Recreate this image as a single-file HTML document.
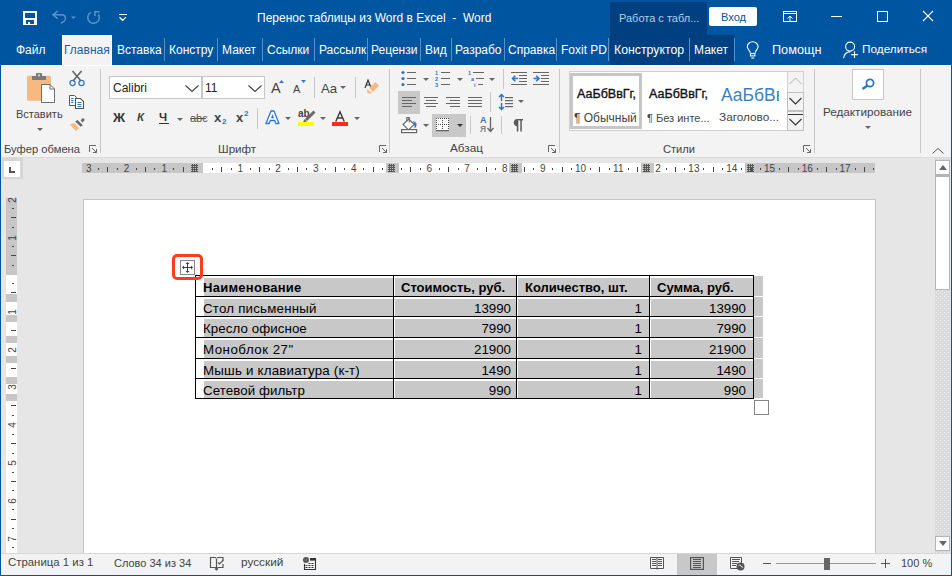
<!DOCTYPE html>
<html><head><meta charset="utf-8"><style>*{box-sizing:border-box}
html,body{margin:0;padding:0;width:952px;height:576px;overflow:hidden;background:#e6e6e6;font-family:"Liberation Sans",sans-serif;position:relative}
.a{position:absolute}
svg.a{overflow:visible}
.t{position:absolute;white-space:nowrap;line-height:1}
.rn{font-size:10px;color:#444;line-height:10px}
</style></head><body>
<div class="a" style="left:0px;top:0px;width:952px;height:65px;background:#0055a0;"></div>
<div class="a" style="left:610px;top:2px;width:97px;height:33px;background:#003f80;"></div>
<div class="a" style="left:610px;top:35px;width:124px;height:30px;background:#003f80;"></div>
<div class="t" style="left:257px;top:11.84px;font-size:12px;color:#fff;font-weight:400;white-space:pre">Перенос таблицы из Word в Excel  -  Word</div>
<div class="t" style="left:619px;top:12.69px;font-size:11px;color:#b9cde6;font-weight:400;">Работа с табл...</div>
<div class="a" style="left:709px;top:7px;width:48px;height:19px;background:#fff;border-radius:2px"></div>
<div class="t" style="left:721px;top:11.60px;font-size:11.1px;color:#0055a0;font-weight:400;">Вход</div>
<svg class="a" style="left:23px;top:11px" width="14" height="14" viewBox="0 0 14 14"><rect x="0" y="0" width="14" height="14" fill="#fff"/><rect x="2" y="2" width="10" height="5" fill="#0055a0"/><rect x="3" y="9" width="8" height="4" fill="#0055a0"/><rect x="5" y="11" width="2" height="2" fill="#fff"/></svg>
<svg class="a" style="left:46px;top:6px" width="60" height="24" viewBox="46 6 60 24"><g fill="none" stroke="#5e90cc" stroke-width="1.5"><path d="M52.5 14.8 H61 C64 14.8 65.5 16.5 65.5 18.3 C65.5 20.5 63 22.5 60.8 23"/><path d="M57.7 11 L53 14.8 L57.7 18.6"/><path d="M91 12.3 A5.8 5.8 0 1 0 98.3 14.2"/><path d="M95 16 V11.7 H99.6"/></g><path d="M71 16.5H76L73.5 19Z" fill="#5e90cc"/></svg>
<svg class="a" style="left:117px;top:13px" width="12" height="9" viewBox="0 0 12 9"><rect x="2" y="1" width="8" height="1" fill="#fff"/><path d="M2.5 4.2 L5.7 7.3 L8.8 4.2" fill="none" stroke="#fff" stroke-width="1.2"/></svg>
<svg class="a" style="left:783px;top:11px" width="14" height="11" viewBox="0 0 14 11"><g fill="none" stroke="#fff" stroke-width="1"><rect x="0.5" y="0.5" width="13" height="10"/><path d="M0.5 2.5H13.5"/><path d="M7 10.5V5 M4.5 7.5 L7 5 L9.5 7.5"/></g></svg>
<div class="a" style="left:831px;top:16px;width:11px;height:1px;background:#fff;"></div>
<svg class="a" style="left:877px;top:11px" width="11" height="11" viewBox="0 0 11 11"><rect x="0.5" y="0.5" width="10" height="10" fill="none" stroke="#fff" stroke-width="1"/></svg>
<svg class="a" style="left:922px;top:10px" width="12" height="12" viewBox="0 0 12 12"><path d="M1 1L11 11M11 1L1 11" stroke="#fff" stroke-width="1.1"/></svg>
<div class="a" style="left:62px;top:35px;width:50px;height:31px;background:#f3f3f3;border-left:1px solid #fff;border-right:1px solid #fff"></div>
<div class="t" style="left:16px;top:43.84px;font-size:12px;color:#fff;font-weight:400;">Файл</div>
<div class="t" style="left:64px;top:43.84px;font-size:12px;color:#1e5aa8;font-weight:400;">Главная</div>
<div class="t" style="left:117px;top:43.84px;font-size:12px;color:#fff;font-weight:400;">Вставка</div>
<div class="t" style="left:169px;top:43.84px;font-size:12px;color:#fff;font-weight:400;">Констру</div>
<div class="t" style="left:222px;top:43.84px;font-size:12px;color:#fff;font-weight:400;">Макет</div>
<div class="t" style="left:267px;top:43.84px;font-size:12px;color:#fff;font-weight:400;">Ссылки</div>
<div class="t" style="left:319px;top:43.84px;font-size:12px;color:#fff;font-weight:400;">Рассылк</div>
<div class="t" style="left:371px;top:43.84px;font-size:12px;color:#fff;font-weight:400;">Рецензи</div>
<div class="t" style="left:425px;top:43.84px;font-size:12px;color:#fff;font-weight:400;">Вид</div>
<div class="t" style="left:455px;top:43.84px;font-size:12px;color:#fff;font-weight:400;">Разрабо</div>
<div class="t" style="left:508px;top:43.84px;font-size:12px;color:#fff;font-weight:400;">Справка</div>
<div class="t" style="left:561px;top:43.84px;font-size:12px;color:#fff;font-weight:400;">Foxit PD</div>
<div class="t" style="left:614px;top:43.59px;font-size:12.3px;color:#fff;font-weight:400;">Конструктор</div>
<div class="t" style="left:694px;top:43.84px;font-size:12px;color:#fff;font-weight:400;">Макет</div>
<div class="t" style="left:772px;top:44.25px;font-size:12.7px;color:#fff;font-weight:400;">Помощн</div>
<div class="t" style="left:862px;top:44.01px;font-size:11.8px;color:#fff;font-weight:400;">Поделиться</div>
<div class="a" style="left:164px;top:38px;width:1px;height:23px;background:#5a8fca;"></div>
<div class="a" style="left:217px;top:38px;width:1px;height:23px;background:#5a8fca;"></div>
<div class="a" style="left:262px;top:38px;width:1px;height:23px;background:#5a8fca;"></div>
<div class="a" style="left:314px;top:38px;width:1px;height:23px;background:#5a8fca;"></div>
<div class="a" style="left:367px;top:38px;width:1px;height:23px;background:#5a8fca;"></div>
<div class="a" style="left:420px;top:38px;width:1px;height:23px;background:#5a8fca;"></div>
<div class="a" style="left:451px;top:38px;width:1px;height:23px;background:#5a8fca;"></div>
<div class="a" style="left:504px;top:38px;width:1px;height:23px;background:#5a8fca;"></div>
<div class="a" style="left:556px;top:38px;width:1px;height:23px;background:#5a8fca;"></div>
<div class="a" style="left:608px;top:38px;width:1px;height:23px;background:#5a8fca;"></div>
<div class="a" style="left:689px;top:38px;width:1px;height:23px;background:#5a8fca;"></div>
<div class="a" style="left:734px;top:38px;width:1px;height:23px;background:#5a8fca;"></div>
<svg class="a" style="left:746px;top:40px" width="14" height="19" viewBox="0 0 14 19"><g fill="none" stroke="#fff" stroke-width="1.1"><path d="M4.5 12.8 L3.2 10.6 C2 9 1.3 8 1.3 6.8 A5.4 5 0 0 1 12.1 6.8 C12.1 8 11.4 9 10.2 10.6 L8.9 12.8"/><rect x="4.5" y="13.5" width="4.4" height="2.4"/><path d="M5.3 18 H8.2"/></g></svg>
<svg class="a" style="left:840px;top:40px" width="20" height="20" viewBox="0 0 20 20"><g fill="none" stroke="#fff" stroke-width="1.1"><circle cx="10.1" cy="6.6" r="4.5"/><path d="M3.6 18.2 C4 14.5 6.5 12 10.5 11.6"/><path d="M14.5 11.2 V18 M11.1 14.6 H17.9"/></g></svg>
<div class="a" style="left:0px;top:65px;width:952px;height:93px;background:#f3f3f3;border-top:1px solid #fff;border-left:1px solid #fff"></div>
<div class="a" style="left:0px;top:157px;width:952px;height:1px;background:#dadada;"></div>
<div class="a" style="left:100px;top:69px;width:1px;height:84px;background:#c8c8c8;"></div>
<div class="a" style="left:389px;top:69px;width:1px;height:84px;background:#c8c8c8;"></div>
<div class="a" style="left:559px;top:69px;width:1px;height:84px;background:#c8c8c8;"></div>
<div class="a" style="left:814px;top:69px;width:1px;height:84px;background:#c8c8c8;"></div>
<div class="a" style="left:920px;top:69px;width:1px;height:84px;background:#c8c8c8;"></div>
<div class="t" style="left:4px;top:143.52px;font-size:11.2px;color:#444;font-weight:400;">Буфер обмена</div>
<div class="t" style="left:218px;top:143.18px;font-size:11.6px;color:#444;font-weight:400;">Шрифт</div>
<div class="t" style="left:450px;top:143.01px;font-size:11.8px;color:#444;font-weight:400;">Абзац</div>
<div class="t" style="left:663px;top:143.60px;font-size:11.1px;color:#444;font-weight:400;">Стили</div>
<svg class="a" style="left:89px;top:145px" width="8" height="8" viewBox="0 0 8 8"><g fill="none" stroke="#666" stroke-width="1"><path d="M0.5 7V0.5H7"/><path d="M3 3L7.5 7.5M7.5 4V7.5H4"/></g></svg>
<svg class="a" style="left:379px;top:145px" width="8" height="8" viewBox="0 0 8 8"><g fill="none" stroke="#666" stroke-width="1"><path d="M0.5 7V0.5H7"/><path d="M3 3L7.5 7.5M7.5 4V7.5H4"/></g></svg>
<svg class="a" style="left:548px;top:145px" width="8" height="8" viewBox="0 0 8 8"><g fill="none" stroke="#666" stroke-width="1"><path d="M0.5 7V0.5H7"/><path d="M3 3L7.5 7.5M7.5 4V7.5H4"/></g></svg>
<svg class="a" style="left:803px;top:145px" width="8" height="8" viewBox="0 0 8 8"><g fill="none" stroke="#666" stroke-width="1"><path d="M0.5 7V0.5H7"/><path d="M3 3L7.5 7.5M7.5 4V7.5H4"/></g></svg>
<svg class="a" style="left:26px;top:72px" width="31" height="32" viewBox="0 0 31 32">
<rect x="1" y="3.8" width="24" height="25" rx="1.5" fill="#f7b97e"/>
<rect x="6" y="4" width="14" height="4" fill="#7a7a7a"/>
<rect x="10" y="1" width="6" height="4.5" rx="1" fill="#7a7a7a"/>
<rect x="12" y="2.3" width="2" height="2" fill="#d0d0d0"/>
<path d="M15.5 12.5 H24 L28.5 17 V30.5 H15.5 Z" fill="#fff" stroke="#6d6d6d" stroke-width="1"/>
<path d="M24 12.5 V17 H28.5" fill="none" stroke="#6d6d6d" stroke-width="1"/>
</svg>
<div class="t" style="left:16px;top:108.69px;font-size:11px;color:#444;font-weight:400;">Вставить</div>
<svg class="a" style="left:37px;top:128px" width="6" height="3" viewBox="0 0 6 3"><path d="M0 0H6L3 3Z" fill="#666"/></svg>
<svg class="a" style="left:69px;top:70px" width="16" height="17" viewBox="0 0 16 17">
<path d="M4 11 L12.5 1 M12 11 L3.5 1" stroke="#666" stroke-width="1.7" fill="none"/>
<circle cx="3.5" cy="13" r="2.6" fill="none" stroke="#2f77c2" stroke-width="1.2"/>
<circle cx="12.5" cy="13" r="2.6" fill="none" stroke="#2f77c2" stroke-width="1.2"/>
</svg>
<svg class="a" style="left:68px;top:94px" width="17" height="16" viewBox="0 0 17 16">
<path d="M1.5 1.5H6.5L8.5 3.5V11.5H1.5Z" fill="#fff" stroke="#555" stroke-width="1"/>
<path d="M7.5 4.5H12.5L15.5 7.5V14.5H7.5Z" fill="#fff" stroke="#555" stroke-width="1.1"/>
<path d="M9.5 8.5H13.5M9.5 10.5H13.5M9.5 12.5H13.5" stroke="#2f77c2" stroke-width="1"/>
<path d="M3 4.5H5.5M3 6.5H5.5M3 8.5H5.5" stroke="#2f77c2" stroke-width="1"/>
</svg>
<svg class="a" style="left:69px;top:117px" width="17" height="15" viewBox="0 0 17 15">
<path d="M11.7 3.2 L13.8 1.1 L15.9 2.8 L13.4 5.5Z" fill="#666"/>
<path d="M6.2 4.4 L8.5 3 L13.8 8.2 L11.7 9.7Z" fill="#666"/>
<path d="M0.8 7.6 L5.2 5.9 L10.2 11 L6.9 13.9Z" fill="#f7b97e"/>
</svg>
<div class="a" style="left:109px;top:76px;width:93px;height:23px;background:#fff;border:1px solid #c6c6c6;"></div>
<div class="t" style="left:113px;top:81.84px;font-size:12px;color:#222;font-weight:400;">Calibri</div>
<svg class="a" style="left:185px;top:85px" width="14" height="7" viewBox="0 0 14 7"><path d="M0.5 0.5L7 6.5L13.5 0.5" fill="none" stroke="#444" stroke-width="1.2"/></svg>
<div class="a" style="left:202px;top:76px;width:63px;height:23px;background:#fff;border:1px solid #c6c6c6;"></div>
<div class="t" style="left:205px;top:81.84px;font-size:12px;color:#222;font-weight:400;">11</div>
<svg class="a" style="left:248px;top:85px" width="14" height="7" viewBox="0 0 14 7"><path d="M0.5 0.5L7 6.5L13.5 0.5" fill="none" stroke="#444" stroke-width="1.2"/></svg>
<div class="t" style="left:271px;top:80.73px;font-size:14.5px;color:#444;font-weight:400;">A</div>
<svg class="a" style="left:279px;top:80px" width="5" height="3" viewBox="0 0 5 3"><path d="M0 3H5L2.5 0Z" fill="#2f77c2"/></svg>
<div class="t" style="left:293px;top:83.69px;font-size:11px;color:#444;font-weight:400;">A</div>
<svg class="a" style="left:301px;top:80px" width="5" height="3" viewBox="0 0 5 3"><path d="M0 0H5L2.5 3Z" fill="#2f77c2"/></svg>
<div class="a" style="left:314px;top:77px;width:1px;height:21px;background:#c8c8c8;"></div>
<div class="t" style="left:321px;top:81.83px;font-size:13.2px;color:#444;font-weight:400;">Aa</div>
<svg class="a" style="left:340px;top:86px" width="6" height="3" viewBox="0 0 6 3"><path d="M0 0H6L3 3Z" fill="#666"/></svg>
<div class="a" style="left:355px;top:77px;width:1px;height:21px;background:#c8c8c8;"></div>
<svg class="a" style="left:364px;top:79px" width="16" height="16" viewBox="0 0 16 16"><path d="M1 9 L4 1.2 L6.8 8 M2.2 6 H6" fill="none" stroke="#333" stroke-width="1.2"/><path d="M5 8.75 L11.5 2.9 L15 6.5 L9 12.9Z" fill="#f7b97e"/><path d="M3.3 10.3 L8 14 L7.3 14.8 L4 14.3 L2.8 12Z" fill="#f7b97e"/></svg>
<div class="t" style="left:113px;top:111.24px;font-size:13.3px;color:#333;font-weight:700;">Ж</div>
<div class="t" style="left:137px;top:112.27px;font-size:11.5px;color:#444;font-weight:700;font-style:italic">К</div>
<div class="t" style="left:159px;top:112.27px;font-size:11.5px;color:#333;font-weight:700;">Ч</div>
<div class="a" style="left:159px;top:123px;width:10px;height:1px;background:#333;"></div>
<svg class="a" style="left:177px;top:118px" width="6" height="3" viewBox="0 0 6 3"><path d="M0 0H6L3 3Z" fill="#666"/></svg>
<div class="t" style="left:190px;top:112.69px;font-size:11px;color:#555;font-weight:400;">abc</div>
<div class="a" style="left:190px;top:118px;width:16px;height:1px;background:#555;"></div>
<div class="t" style="left:214px;top:111.00px;font-size:13px;color:#444;font-weight:700;">x</div>
<div class="t" style="left:222px;top:118.23px;font-size:8px;color:#2f77c2;font-weight:700;">2</div>
<div class="t" style="left:236px;top:111.00px;font-size:13px;color:#444;font-weight:700;">x</div>
<div class="t" style="left:244px;top:110.23px;font-size:8px;color:#2f77c2;font-weight:700;">2</div>
<div class="a" style="left:257px;top:108px;width:1px;height:21px;background:#c8c8c8;"></div>
<svg class="a" style="left:265px;top:110px" width="15" height="15" viewBox="0 0 15 15"><path d="M1 13.5 L6 1 H9 L14 13.5 H10.8 L9.8 10.5 H5.2 L4.2 13.5Z" fill="#fff" stroke="#2f77c2" stroke-width="1.3" stroke-linejoin="round"/><path d="M6 8.2 L7.5 4 L9 8.2Z" fill="#2f77c2"/></svg>
<svg class="a" style="left:285px;top:117px" width="6" height="3" viewBox="0 0 6 3"><path d="M0 0H6L3 3Z" fill="#666"/></svg>
<div class="t" style="left:298px;top:108.53px;font-size:10px;color:#444;font-weight:700;">ab</div>
<svg class="a" style="left:300px;top:110px" width="16" height="13" viewBox="0 0 16 13"><path d="M14.5 1.5 L6 10" stroke="#6a6a6a" stroke-width="3" stroke-linecap="butt"/><path d="M4.5 9 L7 11.5 L3 12.5Z" fill="#6a6a6a"/></svg>
<div class="a" style="left:298px;top:122px;width:16px;height:4px;background:#ffff00;"></div>
<svg class="a" style="left:320px;top:117px" width="6" height="3" viewBox="0 0 6 3"><path d="M0 0H6L3 3Z" fill="#666"/></svg>
<svg class="a" style="left:335px;top:111px" width="10" height="11" viewBox="0 0 10 11"><path d="M0.8 10.5 L5 0.8 L9.2 10.5 M2.4 7 H7.6" fill="none" stroke="#3a3a3a" stroke-width="1.4"/></svg>
<div class="a" style="left:332px;top:122px;width:16px;height:4px;background:#ff2a1a;"></div>
<svg class="a" style="left:354px;top:117px" width="6" height="3" viewBox="0 0 6 3"><path d="M0 0H6L3 3Z" fill="#666"/></svg>
<svg class="a" style="left:401px;top:70px" width="15" height="16" viewBox="0 0 15 16"><g fill="#2f77c2"><circle cx="2" cy="2.5" r="1.6"/><circle cx="2" cy="8.5" r="1.6"/><circle cx="2" cy="14.5" r="1.6"/></g><g fill="#666"><rect x="6" y="2" width="9" height="1"/><rect x="6" y="8" width="9" height="1"/><rect x="6" y="14" width="9" height="1"/></g></svg>
<svg class="a" style="left:423px;top:78px" width="6" height="3" viewBox="0 0 6 3"><path d="M0 0H6L3 3Z" fill="#666"/></svg>
<svg class="a" style="left:435px;top:70px" width="16" height="16" viewBox="0 0 16 16"><g fill="#2f77c2" font-size="5.5" font-family="Liberation Sans" font-weight="700"><text x="0" y="5">1</text><text x="0" y="11">2</text><text x="0" y="17">3</text></g><g fill="#666"><rect x="6" y="2" width="9" height="1"/><rect x="6" y="8" width="9" height="1"/><rect x="6" y="14" width="9" height="1"/></g></svg>
<svg class="a" style="left:457px;top:78px" width="6" height="3" viewBox="0 0 6 3"><path d="M0 0H6L3 3Z" fill="#666"/></svg>
<svg class="a" style="left:468px;top:70px" width="17" height="16" viewBox="0 0 17 16"><g fill="#2f77c2" font-size="5.5" font-family="Liberation Sans" font-weight="700"><text x="0" y="5">1</text><text x="3" y="11">a</text><text x="6" y="17">i</text></g><g fill="#666"><rect x="5" y="2" width="11" height="1"/><rect x="8" y="8" width="8" height="1"/><rect x="10" y="14" width="5" height="1"/></g></svg>
<svg class="a" style="left:489px;top:78px" width="6" height="3" viewBox="0 0 6 3"><path d="M0 0H6L3 3Z" fill="#666"/></svg>
<div class="a" style="left:503px;top:69px;width:1px;height:20px;background:#c8c8c8;"></div>
<svg class="a" style="left:511px;top:72px" width="16" height="13" viewBox="0 0 16 13"><g fill="#666"><rect x="0" y="0" width="16" height="1"/><rect x="8" y="3" width="8" height="1"/><rect x="8" y="6" width="8" height="1"/><rect x="8" y="9" width="8" height="1"/><rect x="0" y="12" width="16" height="1"/></g><path d="M7 6.5H1.5 M4.3 3.7L1.5 6.5L4.3 9.3" fill="none" stroke="#2f77c2" stroke-width="1.6"/></svg>
<svg class="a" style="left:533px;top:72px" width="16" height="13" viewBox="0 0 16 13"><g fill="#666"><rect x="0" y="0" width="16" height="1"/><rect x="8" y="3" width="8" height="1"/><rect x="8" y="6" width="8" height="1"/><rect x="8" y="9" width="8" height="1"/><rect x="0" y="12" width="16" height="1"/></g><path d="M0.5 6.5H6 M3.2 3.7L6 6.5L3.2 9.3" fill="none" stroke="#2f77c2" stroke-width="1.6"/></svg>
<div class="a" style="left:398px;top:91px;width:22px;height:23px;background:#c8c8c8;"></div>
<svg class="a" style="left:402px;top:97px" width="14" height="10" viewBox="0 0 14 10"><g fill="#666"><rect x="0" y="0" width="14" height="1"/><rect x="0" y="3" width="10" height="1"/><rect x="0" y="6" width="14" height="1"/><rect x="0" y="9" width="10" height="1"/></g></svg>
<svg class="a" style="left:424px;top:97px" width="14" height="10" viewBox="0 0 14 10"><g fill="#666"><rect x="0" y="0" width="14" height="1"/><rect x="2" y="3" width="10" height="1"/><rect x="0" y="6" width="14" height="1"/><rect x="2" y="9" width="10" height="1"/></g></svg>
<svg class="a" style="left:446px;top:97px" width="14" height="10" viewBox="0 0 14 10"><g fill="#666"><rect x="0" y="0" width="14" height="1"/><rect x="4" y="3" width="10" height="1"/><rect x="0" y="6" width="14" height="1"/><rect x="4" y="9" width="10" height="1"/></g></svg>
<svg class="a" style="left:468px;top:97px" width="14" height="10" viewBox="0 0 14 10"><g fill="#666"><rect x="0" y="0" width="14" height="1"/><rect x="0" y="3" width="14" height="1"/><rect x="0" y="6" width="14" height="1"/><rect x="0" y="9" width="14" height="1"/></g></svg>
<div class="a" style="left:490px;top:92px;width:1px;height:20px;background:#c8c8c8;"></div>
<svg class="a" style="left:497px;top:93px" width="17" height="18" viewBox="0 0 17 18"><g fill="#666"><rect x="8" y="4" width="8" height="1.2"/><rect x="8" y="7" width="8" height="1.2"/><rect x="8" y="10" width="8" height="1.2"/><rect x="8" y="13" width="8" height="1.2"/></g><path d="M4.5 1.5V8 M2 4 L4.5 1.5 L7 4 M4.5 10V16.5 M2 14 L4.5 16.5 L7 14" fill="none" stroke="#2f77c2" stroke-width="1.5"/></svg>
<svg class="a" style="left:518px;top:100px" width="6" height="3" viewBox="0 0 6 3"><path d="M0 0H6L3 3Z" fill="#666"/></svg>
<svg class="a" style="left:400px;top:116px" width="18" height="18" viewBox="0 0 18 18"><path d="M3 8.5 L8.7 3 L14.3 8.5 L8.5 13.8 Z" fill="#fff" stroke="#666" stroke-width="1.1"/><path d="M6.8 5.5 V1.5 H9.3 V6.5" fill="none" stroke="#666" stroke-width="1.1"/><path d="M13 5 Q17 6.5 16.6 9 Q16.2 11 14.6 12.5 L14.3 8.5Z" fill="#2f77c2"/><rect x="1.6" y="13.6" width="15" height="3" fill="#fff" stroke="#666" stroke-width="1.2"/></svg>
<svg class="a" style="left:423px;top:124px" width="6" height="3" viewBox="0 0 6 3"><path d="M0 0H6L3 3Z" fill="#666"/></svg>
<div class="a" style="left:432px;top:114px;width:34px;height:23px;background:#c8c8c8;"></div>
<svg class="a" style="left:436px;top:118px" width="13" height="14" viewBox="0 0 13 14"><rect x="0" y="0" width="13" height="12" fill="#fff"/><g fill="#444"><rect x="0" y="0" width="1" height="1"/><rect x="2" y="0" width="1" height="1"/><rect x="4" y="0" width="1" height="1"/><rect x="6" y="0" width="1" height="1"/><rect x="8" y="0" width="1" height="1"/><rect x="10" y="0" width="1" height="1"/><rect x="12" y="0" width="1" height="1"/><rect x="0" y="2" width="1" height="1"/><rect x="12" y="2" width="1" height="1"/><rect x="0" y="4" width="1" height="1"/><rect x="12" y="4" width="1" height="1"/><rect x="0" y="6" width="1" height="1"/><rect x="12" y="6" width="1" height="1"/><rect x="0" y="8" width="1" height="1"/><rect x="12" y="8" width="1" height="1"/><rect x="0" y="10" width="1" height="1"/><rect x="12" y="10" width="1" height="1"/><rect x="6" y="2" width="1" height="1"/><rect x="6" y="4" width="1" height="1"/><rect x="6" y="8" width="1" height="1"/><rect x="6" y="10" width="1" height="1"/><rect x="2" y="6" width="1" height="1"/><rect x="4" y="6" width="1" height="1"/><rect x="6" y="6" width="1" height="1"/><rect x="8" y="6" width="1" height="1"/><rect x="10" y="6" width="1" height="1"/><rect x="0" y="12" width="13" height="1.3" fill="#666"/></g></svg>
<svg class="a" style="left:457px;top:124px" width="6" height="3" viewBox="0 0 6 3"><path d="M0 0H6L3 3Z" fill="#333"/></svg>
<div class="a" style="left:470px;top:116px;width:1px;height:18px;background:#c8c8c8;"></div>
<div class="t" style="left:480px;top:116.38px;font-size:9px;color:#2f77c2;font-weight:700;">A</div>
<div class="t" style="left:480px;top:124.80px;font-size:8.5px;color:#888;font-weight:700;">Я</div>
<svg class="a" style="left:487px;top:117px" width="7" height="16" viewBox="0 0 7 16"><path d="M3.5 0V14 M0.5 11L3.5 14.5L6.5 11" fill="none" stroke="#666" stroke-width="1.3"/></svg>
<div class="a" style="left:501px;top:116px;width:1px;height:18px;background:#c8c8c8;"></div>
<svg class="a" style="left:512px;top:119px" width="11" height="13" viewBox="0 0 11 13"><g fill="#5a5a5a"><path d="M6 0 H11 V1.4 H6 Z"/><path d="M5.6 0 A3.8 3.6 0 0 0 5.6 7.2 Z"/><rect x="4.8" y="0" width="1.5" height="12.5"/><rect x="8.3" y="0" width="1.5" height="12.5"/></g></svg>
<div class="a" style="left:569px;top:71px;width:235px;height:60px;background:#fff;border:1px solid #d0d0d0;"></div>
<div class="a" style="left:570px;top:73px;width:72px;height:56px;border:3px solid #c6c6c6;"></div>
<div class="t" style="left:577px;top:88.42px;font-size:12.5px;color:#111;font-weight:400;-webkit-text-stroke:0.35px #111">АаБбВвГг,</div>
<div class="t" style="left:574px;top:111.84px;font-size:12px;color:#444;font-weight:400;">¶ Обычный</div>
<div class="t" style="left:649px;top:88.42px;font-size:12.5px;color:#111;font-weight:400;-webkit-text-stroke:0.35px #111">АаБбВвГг,</div>
<div class="t" style="left:647px;top:112.69px;font-size:11px;color:#444;font-weight:400;">¶ Без инте...</div>
<div class="a" style="left:719px;top:80px;width:60px;height:24px;overflow:hidden"><div class="t" style="left:2px;top:6.5px;font-size:17.5px;color:#3a7fc1">АаБбВв</div></div>
<div class="t" style="left:719px;top:112.01px;font-size:11.8px;color:#444;font-weight:400;">Заголово...</div>
<div class="a" style="left:787px;top:71px;width:17px;height:60px;background:#f3f3f3;border:1px solid #d0d0d0;"></div>
<div class="a" style="left:787px;top:92px;width:17px;height:19px;background:#f3f3f3;border:1px solid #c0c0c0;"></div>
<div class="a" style="left:787px;top:111px;width:17px;height:20px;background:#f3f3f3;border:1px solid #c0c0c0;"></div>
<svg class="a" style="left:789px;top:77px" width="13" height="8" viewBox="0 0 13 8"><path d="M0.5 7L6.5 1L12.5 7" fill="none" stroke="#b4b4b4" stroke-width="1"/></svg>
<svg class="a" style="left:789px;top:97px" width="13" height="8" viewBox="0 0 13 8"><path d="M0.5 1L6.5 7L12.5 1" fill="none" stroke="#333" stroke-width="1.1"/></svg>
<div class="a" style="left:788px;top:114px;width:15px;height:1px;background:#333;"></div>
<svg class="a" style="left:789px;top:118px" width="13" height="8" viewBox="0 0 13 8"><path d="M0.5 1L6.5 7L12.5 1" fill="none" stroke="#333" stroke-width="1.1"/></svg>
<div class="a" style="left:852px;top:69px;width:32px;height:31px;background:#fff;border:1px solid #c8c8c8;"></div>
<svg class="a" style="left:861px;top:78px" width="14" height="12" viewBox="0 0 14 12"><circle cx="9" cy="5" r="3.6" fill="none" stroke="#2f77c2" stroke-width="1.8"/><path d="M6.5 7.5L1.5 11" stroke="#2f77c2" stroke-width="2.4"/></svg>
<div class="t" style="left:823px;top:106.10px;font-size:11.7px;color:#444;font-weight:400;">Редактирование</div>
<svg class="a" style="left:865px;top:126px" width="6" height="3" viewBox="0 0 6 3"><path d="M0 0H6L3 3Z" fill="#666"/></svg>
<svg class="a" style="left:932px;top:148px" width="12" height="6" viewBox="0 0 12 6"><path d="M0.5 5.5L6 0.5L11.5 5.5" fill="none" stroke="#555" stroke-width="1"/></svg>
<div class="a" style="left:0px;top:158px;width:952px;height:395px;background:#e6e6e6;"></div>
<div class="a" style="left:2px;top:158px;width:21px;height:21px;background:#d6d6d6;"></div>
<div class="a" style="left:4px;top:161px;width:16px;height:16px;background:#fff;"></div>
<svg class="a" style="left:9px;top:167px" width="6" height="6" viewBox="0 0 6 6"><path d="M1 0V5H6" fill="none" stroke="#555" stroke-width="2"/></svg>
<div class="a" style="left:82px;top:163px;width:793px;height:10px;background:#c6c6c6;"></div>
<div class="a" style="left:203px;top:163px;width:542px;height:10px;background:#fff;"></div>
<div class="t rn" style="left:78.8px;top:164px;width:20px;text-align:center">3</div>
<div class="a" style="left:98px;top:168px;width:1px;height:2px;background:#444;"></div>
<div class="a" style="left:107px;top:167px;width:1px;height:5px;background:#444;"></div>
<div class="a" style="left:117px;top:168px;width:1px;height:2px;background:#444;"></div>
<div class="t rn" style="left:116.6px;top:164px;width:20px;text-align:center">2</div>
<div class="a" style="left:136px;top:168px;width:1px;height:2px;background:#444;"></div>
<div class="a" style="left:145px;top:167px;width:1px;height:5px;background:#444;"></div>
<div class="a" style="left:154px;top:168px;width:1px;height:2px;background:#444;"></div>
<div class="t rn" style="left:154.4px;top:164px;width:20px;text-align:center">1</div>
<div class="a" style="left:173px;top:168px;width:1px;height:2px;background:#444;"></div>
<div class="a" style="left:183px;top:167px;width:1px;height:5px;background:#444;"></div>
<div class="a" style="left:192px;top:168px;width:1px;height:2px;background:#444;"></div>
<div class="a" style="left:212px;top:168px;width:1px;height:2px;background:#444;"></div>
<div class="a" style="left:221px;top:167px;width:1px;height:5px;background:#444;"></div>
<div class="a" style="left:231px;top:168px;width:1px;height:2px;background:#444;"></div>
<div class="t rn" style="left:230.3px;top:164px;width:20px;text-align:center">1</div>
<div class="a" style="left:250px;top:168px;width:1px;height:2px;background:#444;"></div>
<div class="a" style="left:259px;top:167px;width:1px;height:5px;background:#444;"></div>
<div class="a" style="left:269px;top:168px;width:1px;height:2px;background:#444;"></div>
<div class="t rn" style="left:268.1px;top:164px;width:20px;text-align:center">2</div>
<div class="a" style="left:288px;top:168px;width:1px;height:2px;background:#444;"></div>
<div class="a" style="left:297px;top:167px;width:1px;height:5px;background:#444;"></div>
<div class="a" style="left:306px;top:168px;width:1px;height:2px;background:#444;"></div>
<div class="t rn" style="left:305.9px;top:164px;width:20px;text-align:center">3</div>
<div class="a" style="left:325px;top:168px;width:1px;height:2px;background:#444;"></div>
<div class="a" style="left:335px;top:167px;width:1px;height:5px;background:#444;"></div>
<div class="a" style="left:344px;top:168px;width:1px;height:2px;background:#444;"></div>
<div class="t rn" style="left:343.7px;top:164px;width:20px;text-align:center">4</div>
<div class="a" style="left:363px;top:168px;width:1px;height:2px;background:#444;"></div>
<div class="a" style="left:373px;top:167px;width:1px;height:5px;background:#444;"></div>
<div class="a" style="left:382px;top:168px;width:1px;height:2px;background:#444;"></div>
<div class="t rn" style="left:381.5px;top:164px;width:20px;text-align:center">5</div>
<div class="a" style="left:401px;top:168px;width:1px;height:2px;background:#444;"></div>
<div class="a" style="left:410px;top:167px;width:1px;height:5px;background:#444;"></div>
<div class="a" style="left:420px;top:168px;width:1px;height:2px;background:#444;"></div>
<div class="t rn" style="left:419.3px;top:164px;width:20px;text-align:center">6</div>
<div class="a" style="left:439px;top:168px;width:1px;height:2px;background:#444;"></div>
<div class="a" style="left:448px;top:167px;width:1px;height:5px;background:#444;"></div>
<div class="a" style="left:458px;top:168px;width:1px;height:2px;background:#444;"></div>
<div class="t rn" style="left:457.1px;top:164px;width:20px;text-align:center">7</div>
<div class="a" style="left:477px;top:168px;width:1px;height:2px;background:#444;"></div>
<div class="a" style="left:486px;top:167px;width:1px;height:5px;background:#444;"></div>
<div class="a" style="left:495px;top:168px;width:1px;height:2px;background:#444;"></div>
<div class="t rn" style="left:494.9px;top:164px;width:20px;text-align:center">8</div>
<div class="a" style="left:514px;top:168px;width:1px;height:2px;background:#444;"></div>
<div class="a" style="left:524px;top:167px;width:1px;height:5px;background:#444;"></div>
<div class="a" style="left:533px;top:168px;width:1px;height:2px;background:#444;"></div>
<div class="t rn" style="left:532.7px;top:164px;width:20px;text-align:center">9</div>
<div class="a" style="left:552px;top:168px;width:1px;height:2px;background:#444;"></div>
<div class="a" style="left:562px;top:167px;width:1px;height:5px;background:#444;"></div>
<div class="a" style="left:571px;top:168px;width:1px;height:2px;background:#444;"></div>
<div class="t rn" style="left:570.5px;top:164px;width:20px;text-align:center">10</div>
<div class="a" style="left:590px;top:168px;width:1px;height:2px;background:#444;"></div>
<div class="a" style="left:599px;top:167px;width:1px;height:5px;background:#444;"></div>
<div class="a" style="left:609px;top:168px;width:1px;height:2px;background:#444;"></div>
<div class="t rn" style="left:608.3px;top:164px;width:20px;text-align:center">11</div>
<div class="a" style="left:628px;top:168px;width:1px;height:2px;background:#444;"></div>
<div class="a" style="left:637px;top:167px;width:1px;height:5px;background:#444;"></div>
<div class="a" style="left:647px;top:168px;width:1px;height:2px;background:#444;"></div>
<div class="t rn" style="left:648px;top:164px;width:20px;text-align:center">2</div>
<div class="a" style="left:666px;top:168px;width:1px;height:2px;background:#444;"></div>
<div class="a" style="left:675px;top:167px;width:1px;height:5px;background:#444;"></div>
<div class="a" style="left:684px;top:168px;width:1px;height:2px;background:#444;"></div>
<div class="t rn" style="left:683.9px;top:164px;width:20px;text-align:center">13</div>
<div class="a" style="left:703px;top:168px;width:1px;height:2px;background:#444;"></div>
<div class="a" style="left:713px;top:167px;width:1px;height:5px;background:#444;"></div>
<div class="a" style="left:722px;top:168px;width:1px;height:2px;background:#444;"></div>
<div class="t rn" style="left:721.7px;top:164px;width:20px;text-align:center">14</div>
<div class="a" style="left:741px;top:168px;width:1px;height:2px;background:#444;"></div>
<div class="a" style="left:751px;top:167px;width:1px;height:5px;background:#444;"></div>
<div class="a" style="left:760px;top:168px;width:1px;height:2px;background:#444;"></div>
<div class="t rn" style="left:759.5px;top:164px;width:20px;text-align:center">15</div>
<div class="a" style="left:779px;top:168px;width:1px;height:2px;background:#444;"></div>
<div class="a" style="left:788px;top:167px;width:1px;height:5px;background:#444;"></div>
<div class="a" style="left:798px;top:168px;width:1px;height:2px;background:#444;"></div>
<div class="t rn" style="left:797.3px;top:164px;width:20px;text-align:center">16</div>
<div class="a" style="left:817px;top:168px;width:1px;height:2px;background:#444;"></div>
<div class="a" style="left:826px;top:167px;width:1px;height:5px;background:#444;"></div>
<div class="a" style="left:836px;top:168px;width:1px;height:2px;background:#444;"></div>
<div class="t rn" style="left:835.1px;top:164px;width:20px;text-align:center">17</div>
<div class="a" style="left:855px;top:168px;width:1px;height:2px;background:#444;"></div>
<div class="a" style="left:864px;top:167px;width:1px;height:5px;background:#444;"></div>
<div class="a" style="left:873px;top:168px;width:1px;height:2px;background:#444;"></div>
<svg class="a" style="left:191px;top:164px" width="7" height="8" viewBox="0 0 7 8"><g fill="#555"><rect x="1" y="0" width="1" height="8"/><rect x="3" y="0" width="1" height="8"/><rect x="5" y="0" width="1" height="8"/><rect x="0" y="1" width="7" height="1"/><rect x="0" y="3" width="7" height="1"/><rect x="0" y="5" width="7" height="1"/><rect x="0" y="7" width="7" height="1"/></g></svg>
<div class="a" style="left:386px;top:163px;width:13px;height:10px;background:#c6c6c6;"></div>
<svg class="a" style="left:388px;top:164px" width="7" height="8" viewBox="0 0 7 8"><g fill="#555"><rect x="1" y="0" width="1" height="8"/><rect x="3" y="0" width="1" height="8"/><rect x="5" y="0" width="1" height="8"/><rect x="0" y="1" width="7" height="1"/><rect x="0" y="3" width="7" height="1"/><rect x="0" y="5" width="7" height="1"/><rect x="0" y="7" width="7" height="1"/></g></svg>
<div class="a" style="left:509px;top:163px;width:13px;height:10px;background:#c6c6c6;"></div>
<svg class="a" style="left:511px;top:164px" width="7" height="8" viewBox="0 0 7 8"><g fill="#555"><rect x="1" y="0" width="1" height="8"/><rect x="3" y="0" width="1" height="8"/><rect x="5" y="0" width="1" height="8"/><rect x="0" y="1" width="7" height="1"/><rect x="0" y="3" width="7" height="1"/><rect x="0" y="5" width="7" height="1"/><rect x="0" y="7" width="7" height="1"/></g></svg>
<div class="a" style="left:641px;top:163px;width:13px;height:10px;background:#c6c6c6;"></div>
<svg class="a" style="left:643px;top:164px" width="7" height="8" viewBox="0 0 7 8"><g fill="#555"><rect x="1" y="0" width="1" height="8"/><rect x="3" y="0" width="1" height="8"/><rect x="5" y="0" width="1" height="8"/><rect x="0" y="1" width="7" height="1"/><rect x="0" y="3" width="7" height="1"/><rect x="0" y="5" width="7" height="1"/><rect x="0" y="7" width="7" height="1"/></g></svg>
<svg class="a" style="left:747px;top:164px" width="7" height="8" viewBox="0 0 7 8"><g fill="#555"><rect x="1" y="0" width="1" height="8"/><rect x="3" y="0" width="1" height="8"/><rect x="5" y="0" width="1" height="8"/><rect x="0" y="1" width="7" height="1"/><rect x="0" y="3" width="7" height="1"/><rect x="0" y="5" width="7" height="1"/><rect x="0" y="7" width="7" height="1"/></g></svg>
<div class="a" style="left:6px;top:198px;width:11px;height:355px;background:#fff;"></div>
<div class="a" style="left:6px;top:198px;width:11px;height:77px;background:#c6c6c6;"></div>
<div class="t rn" style="left:3px;top:195.1px;width:20px;text-align:center;transform:rotate(-90deg)">2</div>
<div class="a" style="left:12px;top:208px;width:2px;height:1px;background:#444;"></div>
<div class="a" style="left:11px;top:217px;width:5px;height:1px;background:#444;"></div>
<div class="a" style="left:12px;top:227px;width:2px;height:1px;background:#444;"></div>
<div class="t rn" style="left:3px;top:232.9px;width:20px;text-align:center;transform:rotate(-90deg)">1</div>
<div class="a" style="left:12px;top:246px;width:2px;height:1px;background:#444;"></div>
<div class="a" style="left:11px;top:255px;width:5px;height:1px;background:#444;"></div>
<div class="a" style="left:12px;top:265px;width:2px;height:1px;background:#444;"></div>
<div class="a" style="left:12px;top:283px;width:2px;height:1px;background:#444;"></div>
<div class="a" style="left:11px;top:292px;width:5px;height:1px;background:#444;"></div>
<div class="a" style="left:12px;top:301px;width:2px;height:1px;background:#444;"></div>
<div class="t rn" style="left:3px;top:306.7px;width:20px;text-align:center;transform:rotate(-90deg)">1</div>
<div class="a" style="left:12px;top:320px;width:2px;height:1px;background:#444;"></div>
<div class="a" style="left:11px;top:330px;width:5px;height:1px;background:#444;"></div>
<div class="a" style="left:12px;top:339px;width:2px;height:1px;background:#444;"></div>
<div class="t rn" style="left:3px;top:344.5px;width:20px;text-align:center;transform:rotate(-90deg)">2</div>
<div class="a" style="left:12px;top:358px;width:2px;height:1px;background:#444;"></div>
<div class="a" style="left:11px;top:368px;width:5px;height:1px;background:#444;"></div>
<div class="a" style="left:12px;top:377px;width:2px;height:1px;background:#444;"></div>
<div class="t rn" style="left:3px;top:382.3px;width:20px;text-align:center;transform:rotate(-90deg)">3</div>
<div class="a" style="left:12px;top:396px;width:2px;height:1px;background:#444;"></div>
<div class="a" style="left:11px;top:405px;width:5px;height:1px;background:#444;"></div>
<div class="a" style="left:12px;top:415px;width:2px;height:1px;background:#444;"></div>
<div class="t rn" style="left:3px;top:420.1px;width:20px;text-align:center;transform:rotate(-90deg)">4</div>
<div class="a" style="left:12px;top:434px;width:2px;height:1px;background:#444;"></div>
<div class="a" style="left:11px;top:443px;width:5px;height:1px;background:#444;"></div>
<div class="a" style="left:12px;top:453px;width:2px;height:1px;background:#444;"></div>
<div class="t rn" style="left:3px;top:457.9px;width:20px;text-align:center;transform:rotate(-90deg)">5</div>
<div class="a" style="left:12px;top:472px;width:2px;height:1px;background:#444;"></div>
<div class="a" style="left:11px;top:481px;width:5px;height:1px;background:#444;"></div>
<div class="a" style="left:12px;top:490px;width:2px;height:1px;background:#444;"></div>
<div class="t rn" style="left:3px;top:495.7px;width:20px;text-align:center;transform:rotate(-90deg)">6</div>
<div class="a" style="left:12px;top:509px;width:2px;height:1px;background:#444;"></div>
<div class="a" style="left:11px;top:519px;width:5px;height:1px;background:#444;"></div>
<div class="a" style="left:12px;top:528px;width:2px;height:1px;background:#444;"></div>
<div class="t rn" style="left:3px;top:533.5px;width:20px;text-align:center;transform:rotate(-90deg)">7</div>
<div class="a" style="left:12px;top:547px;width:2px;height:1px;background:#444;"></div>
<div class="a" style="left:6px;top:294px;width:11px;height:8px;background:#c6c6c6;"></div>
<div class="a" style="left:6px;top:315px;width:11px;height:7px;background:#c6c6c6;"></div>
<div class="a" style="left:6px;top:336px;width:11px;height:7px;background:#c6c6c6;"></div>
<div class="a" style="left:6px;top:356px;width:11px;height:7px;background:#c6c6c6;"></div>
<div class="a" style="left:6px;top:377px;width:11px;height:7px;background:#c6c6c6;"></div>
<div class="a" style="left:6px;top:394px;width:11px;height:7px;background:#c6c6c6;"></div>
<div class="a" style="left:83px;top:199px;width:793px;height:360px;background:#fff;border:1px solid #c6c6c6"></div>
<svg class="a" style="left:935px;top:158px" width="15" height="395" viewBox="0 0 15 395"><defs><pattern id="dots" x="0" y="0" width="4" height="4" patternUnits="userSpaceOnUse"><rect width="4" height="4" fill="#dadada"/><rect x="1" y="2" width="1" height="1" fill="#f0f0f0"/><rect x="3" y="0" width="1" height="1" fill="#f0f0f0"/></pattern></defs><rect width="15" height="395" fill="url(#dots)"/></svg>
<div class="a" style="left:935px;top:160px;width:15px;height:15px;background:#fff;border:1px solid #b4b4b4"></div>
<svg class="a" style="left:939px;top:165px" width="8" height="5" viewBox="0 0 8 5"><path d="M0 5L4 0L8 5Z" fill="#666"/></svg>
<div class="a" style="left:935px;top:175px;width:15px;height:115px;background:#fff;border:1px solid #b4b4b4;border-top:2px solid #b4b4b4"></div>
<div class="a" style="left:935px;top:536px;width:15px;height:15px;background:#fff;border:1px solid #b4b4b4"></div>
<svg class="a" style="left:939px;top:541px" width="8" height="5" viewBox="0 0 8 5"><path d="M0 0L4 5L8 0Z" fill="#666"/></svg>
<div class="a" style="left:204px;top:278px;width:189px;height:18px;background:#c8c8c8;"></div>
<div class="a" style="left:395px;top:278px;width:121px;height:18px;background:#c8c8c8;"></div>
<div class="a" style="left:518px;top:278px;width:131px;height:18px;background:#c8c8c8;"></div>
<div class="a" style="left:651px;top:278px;width:102px;height:18px;background:#c8c8c8;"></div>
<div class="a" style="left:754px;top:276px;width:9px;height:20px;background:#c8c8c8;"></div>
<div class="a" style="left:204px;top:299px;width:189px;height:17px;background:#c8c8c8;"></div>
<div class="a" style="left:395px;top:299px;width:121px;height:17px;background:#c8c8c8;"></div>
<div class="a" style="left:518px;top:299px;width:131px;height:17px;background:#c8c8c8;"></div>
<div class="a" style="left:651px;top:299px;width:102px;height:17px;background:#c8c8c8;"></div>
<div class="a" style="left:754px;top:297px;width:9px;height:19px;background:#c8c8c8;"></div>
<div class="a" style="left:204px;top:319px;width:189px;height:18px;background:#c8c8c8;"></div>
<div class="a" style="left:395px;top:319px;width:121px;height:18px;background:#c8c8c8;"></div>
<div class="a" style="left:518px;top:319px;width:131px;height:18px;background:#c8c8c8;"></div>
<div class="a" style="left:651px;top:319px;width:102px;height:18px;background:#c8c8c8;"></div>
<div class="a" style="left:754px;top:317px;width:9px;height:20px;background:#c8c8c8;"></div>
<div class="a" style="left:204px;top:340px;width:189px;height:18px;background:#c8c8c8;"></div>
<div class="a" style="left:395px;top:340px;width:121px;height:18px;background:#c8c8c8;"></div>
<div class="a" style="left:518px;top:340px;width:131px;height:18px;background:#c8c8c8;"></div>
<div class="a" style="left:651px;top:340px;width:102px;height:18px;background:#c8c8c8;"></div>
<div class="a" style="left:754px;top:338px;width:9px;height:20px;background:#c8c8c8;"></div>
<div class="a" style="left:204px;top:361px;width:189px;height:17px;background:#c8c8c8;"></div>
<div class="a" style="left:395px;top:361px;width:121px;height:17px;background:#c8c8c8;"></div>
<div class="a" style="left:518px;top:361px;width:131px;height:17px;background:#c8c8c8;"></div>
<div class="a" style="left:651px;top:361px;width:102px;height:17px;background:#c8c8c8;"></div>
<div class="a" style="left:754px;top:359px;width:9px;height:19px;background:#c8c8c8;"></div>
<div class="a" style="left:204px;top:381px;width:189px;height:17px;background:#c8c8c8;"></div>
<div class="a" style="left:395px;top:381px;width:121px;height:17px;background:#c8c8c8;"></div>
<div class="a" style="left:518px;top:381px;width:131px;height:17px;background:#c8c8c8;"></div>
<div class="a" style="left:651px;top:381px;width:102px;height:17px;background:#c8c8c8;"></div>
<div class="a" style="left:754px;top:379px;width:9px;height:19px;background:#c8c8c8;"></div>
<div class="a" style="left:195px;top:275px;width:559px;height:1px;background:#000;"></div>
<div class="a" style="left:195px;top:296px;width:559px;height:1px;background:#000;"></div>
<div class="a" style="left:195px;top:316px;width:559px;height:1px;background:#000;"></div>
<div class="a" style="left:195px;top:337px;width:559px;height:1px;background:#000;"></div>
<div class="a" style="left:195px;top:358px;width:559px;height:1px;background:#000;"></div>
<div class="a" style="left:195px;top:378px;width:559px;height:1px;background:#000;"></div>
<div class="a" style="left:195px;top:398px;width:559px;height:1px;background:#000;"></div>
<div class="a" style="left:195px;top:275px;width:1px;height:124px;background:#000;"></div>
<div class="a" style="left:393px;top:275px;width:1px;height:124px;background:#000;"></div>
<div class="a" style="left:516px;top:275px;width:1px;height:124px;background:#000;"></div>
<div class="a" style="left:649px;top:275px;width:1px;height:124px;background:#000;"></div>
<div class="a" style="left:753px;top:275px;width:1px;height:124px;background:#000;"></div>
<div class="t" style="left:203px;top:281.00px;font-size:13px;color:#000;font-weight:700;letter-spacing:0.27px">Наименование</div>
<div class="t" style="left:401px;top:281.00px;font-size:13px;color:#000;font-weight:700;">Стоимость, руб.</div>
<div class="t" style="left:525px;top:281.00px;font-size:13px;color:#000;font-weight:700;">Количество, шт.</div>
<div class="t" style="left:657px;top:281.00px;font-size:13px;color:#000;font-weight:700;">Сумма, руб.</div>
<div class="t" style="left:203px;top:301.74px;font-size:13.3px;color:#000;font-weight:400;letter-spacing:0.21px">Стол письменный</div>
<div class="t" style="right:441px;top:301.74px;font-size:13.3px;color:#000;font-weight:400;">13990</div>
<div class="t" style="right:310px;top:301.74px;font-size:13.3px;color:#000;font-weight:400;">1</div>
<div class="t" style="right:206px;top:301.74px;font-size:13.3px;color:#000;font-weight:400;">13990</div>
<div class="t" style="left:203px;top:321.74px;font-size:13.3px;color:#000;font-weight:400;letter-spacing:0.08px">Кресло офисное</div>
<div class="t" style="right:441px;top:321.74px;font-size:13.3px;color:#000;font-weight:400;">7990</div>
<div class="t" style="right:310px;top:321.74px;font-size:13.3px;color:#000;font-weight:400;">1</div>
<div class="t" style="right:206px;top:321.74px;font-size:13.3px;color:#000;font-weight:400;">7990</div>
<div class="t" style="left:203px;top:342.74px;font-size:13.3px;color:#000;font-weight:400;letter-spacing:0.5px">Моноблок 27&quot;</div>
<div class="t" style="right:441px;top:342.74px;font-size:13.3px;color:#000;font-weight:400;">21900</div>
<div class="t" style="right:310px;top:342.74px;font-size:13.3px;color:#000;font-weight:400;">1</div>
<div class="t" style="right:206px;top:342.74px;font-size:13.3px;color:#000;font-weight:400;">21900</div>
<div class="t" style="left:203px;top:363.74px;font-size:13.3px;color:#000;font-weight:400;letter-spacing:0.21px">Мышь и клавиатура (к-т)</div>
<div class="t" style="right:441px;top:363.74px;font-size:13.3px;color:#000;font-weight:400;">1490</div>
<div class="t" style="right:310px;top:363.74px;font-size:13.3px;color:#000;font-weight:400;">1</div>
<div class="t" style="right:206px;top:363.74px;font-size:13.3px;color:#000;font-weight:400;">1490</div>
<div class="t" style="left:203px;top:383.74px;font-size:13.3px;color:#000;font-weight:400;letter-spacing:0.08px">Сетевой фильтр</div>
<div class="t" style="right:441px;top:383.74px;font-size:13.3px;color:#000;font-weight:400;">990</div>
<div class="t" style="right:310px;top:383.74px;font-size:13.3px;color:#000;font-weight:400;">1</div>
<div class="t" style="right:206px;top:383.74px;font-size:13.3px;color:#000;font-weight:400;">990</div>
<div class="a" style="left:180px;top:260px;width:15px;height:15px;background:#fff;border:1px solid #858585;"></div>
<svg class="a" style="left:180px;top:260px" width="15" height="15" viewBox="0 0 15 15"><g fill="#3c3c3c"><rect x="3" y="7" width="9" height="1"/><rect x="7" y="3" width="1" height="9"/><path d="M2 7.5 L4 5.5 L4 9.5Z M13 7.5 L11 5.5 L11 9.5Z M7.5 2 L5.5 4 L9.5 4Z M7.5 13 L5.5 11 L9.5 11Z"/></g></svg>
<div class="a" style="left:172px;top:254px;width:31px;height:26px;border:3px solid #fb3c1f;border-radius:5px"></div>
<div class="a" style="left:754px;top:400px;width:15px;height:15px;background:#fff;border:1px solid #858585;"></div>
<div class="a" style="left:0px;top:553px;width:952px;height:23px;background:#f3f3f3;border-top:1px solid #d6d6d6"></div>
<div class="t" style="left:8px;top:557.35px;font-size:11.4px;color:#444;font-weight:400;">Страница 1 из 1</div>
<div class="t" style="left:114px;top:557.69px;font-size:11px;color:#444;font-weight:400;">Слово 34 из 34</div>
<div class="t" style="left:241px;top:557.01px;font-size:11.8px;color:#444;font-weight:400;">русский</div>
<div class="t" style="left:901px;top:557.69px;font-size:11px;color:#444;font-weight:400;">100 %</div>
<svg class="a" style="left:209px;top:556px" width="16" height="15" viewBox="0 0 16 15"><g fill="none" stroke="#555" stroke-width="1.2"><path d="M7 2 L6 1.5 H1.5 V11.5 H6 L7 12"/><path d="M7.5 2.5V13.5"/><path d="M6 12.5 L7.5 14 L9 12.5"/><path d="M8 2 L9 1.5 H14 V4.5"/><path d="M14 8 V11.5 H9 L8 12"/><path d="M9 6.5 L10.5 8 L14.5 4"/></g></svg>
<svg class="a" style="left:302px;top:556px" width="15" height="15" viewBox="0 0 15 15"><circle cx="4" cy="4" r="3" fill="#555"/><rect x="3.6" y="2.8" width="0.9" height="2.4" fill="#999"/><rect x="8" y="2" width="6" height="2.6" fill="#333"/><g fill="none" stroke="#333" stroke-width="1.1"><path d="M2.5 8V13.5H13.5V2"/></g><g fill="#333"><rect x="6.5" y="7" width="2" height="1"/><rect x="9.5" y="7" width="2" height="1"/><rect x="3.5" y="9" width="2" height="1"/><rect x="6.5" y="9" width="2" height="1"/><rect x="9.5" y="9" width="2" height="1"/><rect x="3.5" y="11" width="2" height="1"/><rect x="6.5" y="11" width="2" height="1"/><rect x="9.5" y="11" width="2" height="1"/></g></svg>
<svg class="a" style="left:650px;top:557px" width="14" height="13" viewBox="0 0 14 13"><g fill="none" stroke="#555" stroke-width="1"><path d="M0.5 0.5H13.5V11.5H0.5Z"/><path d="M7 0.5V12.5"/></g><g fill="#555"><rect x="2" y="2" width="4" height="1"/><rect x="2" y="4" width="4" height="1"/><rect x="2" y="6" width="4" height="1"/><rect x="2" y="8" width="4" height="1"/><rect x="8" y="2" width="4" height="1"/><rect x="8" y="4" width="4" height="1"/><rect x="8" y="6" width="4" height="1"/><rect x="8" y="8" width="4" height="1"/></g></svg>
<div class="a" style="left:677px;top:554px;width:40px;height:21px;background:#c8c8c8;"></div>
<svg class="a" style="left:690px;top:557px" width="14" height="13" viewBox="0 0 14 13"><g fill="none" stroke="#555" stroke-width="1.2"><rect x="0.6" y="0.6" width="12.8" height="11.8"/></g><g fill="#555"><rect x="3" y="2" width="8" height="1"/><rect x="3" y="4" width="8" height="1"/><rect x="3" y="6" width="8" height="1"/><rect x="3" y="8" width="8" height="1"/><rect x="3" y="10" width="8" height="1"/></g></svg>
<svg class="a" style="left:730px;top:557px" width="15" height="14" viewBox="0 0 15 14"><g fill="none" stroke="#555" stroke-width="1"><path d="M7 11.5H0.5V0.5H11.5V6"/></g><g fill="#555"><rect x="2" y="2" width="8" height="1"/><rect x="2" y="4" width="7" height="1"/><rect x="2" y="6" width="5" height="1"/><rect x="2" y="8" width="4" height="1"/></g><circle cx="10.5" cy="9.5" r="4" fill="#555"/><path d="M8.5 8.5 Q10 7 11 9 Q12 11 13 10" stroke="#f3f3f3" stroke-width="0.9" fill="none"/></svg>
<div class="a" style="left:763px;top:563px;width:8px;height:1px;background:#555;"></div>
<div class="a" style="left:776px;top:563px;width:100px;height:1px;background:#999;"></div>
<div class="a" style="left:824px;top:558px;width:6px;height:12px;background:#666;"></div>
<div class="a" style="left:881px;top:563px;width:9px;height:1px;background:#555;"></div>
<div class="a" style="left:885px;top:559px;width:1px;height:9px;background:#555;"></div>
<div class="a" style="left:0px;top:575px;width:952px;height:1px;background:#0055a0;"></div>
<div class="a" style="left:0px;top:0px;width:1px;height:576px;background:#0055a0;"></div>
<div class="a" style="left:951px;top:0px;width:1px;height:576px;background:#0055a0;"></div>
</body></html>
